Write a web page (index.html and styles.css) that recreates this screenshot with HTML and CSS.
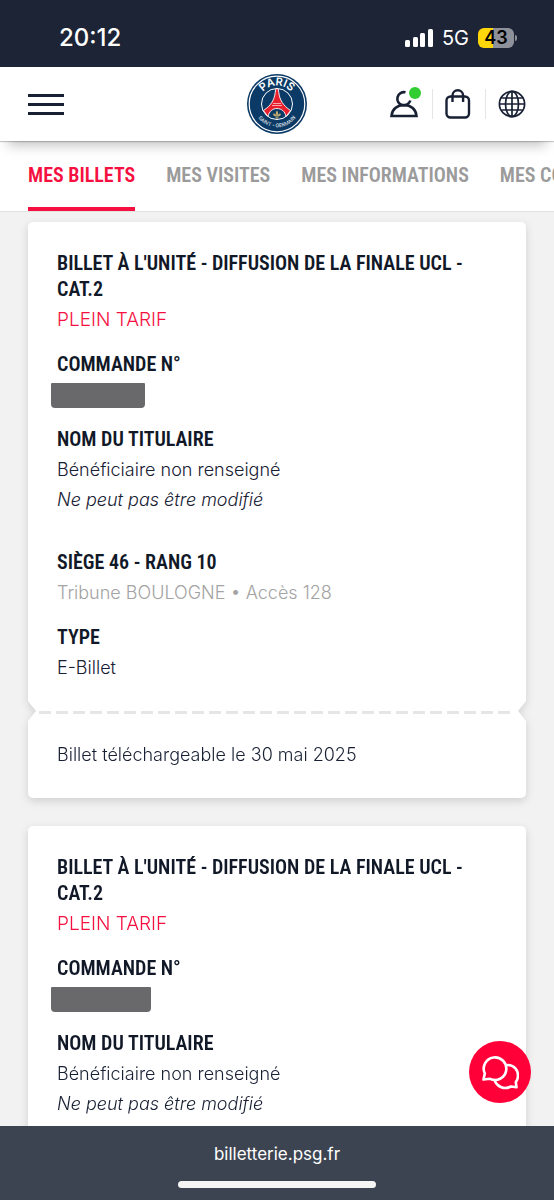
FILE: index.html
```html
<!DOCTYPE html>
<html lang="fr">
<head>
    <meta charset="UTF-8">
    <meta name="viewport" content="width=device-width, initial-scale=1.0">
    <title>Mes billets</title>
    <link rel="stylesheet" href="styles.css">
</head>
<body>
    <div class="status-bar">
        <span class="time">20:12</span>
        <div class="status-right">
            <svg class="signal" viewBox="0 0 28 18" aria-hidden="true">
                <rect x="0" y="11" width="5" height="7" rx="1.5"/>
                <rect x="8" y="8" width="5" height="10" rx="1.5"/>
                <rect x="15" y="4" width="5" height="14" rx="1.5"/>
                <rect x="23" y="0" width="5" height="18" rx="1.5"/>
            </svg>
            <span class="network">5G</span>
            <span class="battery">43</span>
        </div>
    </div>

    <header>
        <button type="button" class="burger" aria-label="Menu"><span></span><span></span><span></span></button>
        <a href="#" class="logo" aria-label="Paris Saint-Germain">
            <svg viewBox="0 0 60 60">
                <circle cx="30" cy="30" r="30" fill="#0b3a66"/>
                <circle cx="30" cy="30" r="27.8" fill="none" stroke="#fff" stroke-width="1.2"/>
                <circle cx="30" cy="30" r="15.5" fill="#0b3a66" stroke="#fff" stroke-width="1"/>
                <path d="M29 14.500h2l.8 4c.8 7 4 13 11.800 18l-4.600 6c-1-5-4.500-8-9-8s-8 3-9 8l-4.600-6c7.800-5 11-11 11.800-18z" fill="#e8202e" stroke="#fff" stroke-width=".9"/>
                <path d="M26 29.500h8M25 31.500h10" stroke="#fff" stroke-width=".6"/>
                <path d="M30 36.500c1.500 2 1.500 3 .5 5 1-.5 1-2.500 3-2 1 1.500-.5 2.500-2 3h-3c-1.500-.5-3-1.500-2-3 2-.5 2 1.500 3 2-1-2-1-3 .5-5zM28 43.300h4l-2 1.700z" fill="#c3ab6c"/>
                <path id="arc-top" d="M11.500 30a18.500 18.500 0 0 1 37 0" fill="none"/>
                <path id="arc-bottom" d="M6.800 30a23.200 23.200 0 0 0 46.400 0" fill="none"/>
                <text class="logo-top" text-anchor="middle"><textPath href="#arc-top" startOffset="50%">PARIS</textPath></text>
                <text class="logo-bottom" text-anchor="middle"><textPath href="#arc-bottom" startOffset="50%">SAINT - GERMAIN</textPath></text>
            </svg>
        </a>
        <div class="tools">
            <button type="button" class="account" aria-label="Mon compte">
                <svg viewBox="0 0 28 28" fill="none" stroke="#182033" stroke-width="2.600">
                    <path d="M15.500 2.300A6.600 6.600 0 1 0 20.300 10.500"/>
                    <path d="M1.500 26c.5-6.500 5.500-11 12.500-11s12 4.500 12.500 11z"/>
                </svg>
                <span class="dot"></span>
            </button>
            <button type="button" class="bag" aria-label="Panier">
                <svg viewBox="0 0 26 30" fill="none" stroke="#182033" stroke-width="2.400">
                    <rect x="1.500" y="7.500" width="22.500" height="21" rx="4"/>
                    <path d="M7.500 13V6.500a5.300 5.300 0 0 1 10.600 0V13"/>
                </svg>
            </button>
            <button type="button" class="language" aria-label="Langue">
                <svg viewBox="0 0 28 28" fill="none" stroke="#182033" stroke-width="1.700">
                    <circle cx="14" cy="14" r="12.600"/>
                    <ellipse cx="14" cy="14" rx="6.500" ry="12.600"/>
                    <path d="M14 1.400v25.200M1.400 14h25.200M3.300 8h21.400M3.300 20h21.400"/>
                </svg>
            </button>
        </div>
    </header>

    <nav>
        <ul>
            <li><a href="#billets" class="active">MES BILLETS</a></li>
            <li><a href="#visites">MES VISITES</a></li>
            <li><a href="#informations">MES INFORMATIONS</a></li>
            <li><a href="#commandes">MES COMMANDES</a></li>
        </ul>
    </nav>

    <main id="billets">
        <article class="ticket">
            <div class="ticket-body">
                <h2>BILLET À L'UNITÉ - DIFFUSION DE LA FINALE UCL - CAT.2</h2>
                <p class="price">PLEIN TARIF</p>
                <h3>COMMANDE N°</h3>
                <p class="order"><span class="masked"></span></p>
                <h3>NOM DU TITULAIRE</h3>
                <p>Bénéficiaire non renseigné</p>
                <p class="note">Ne peut pas être modifié</p>
                <h3>SIÈGE 46 - RANG 10</h3>
                <p class="stand">Tribune BOULOGNE • Accès 128</p>
                <h3>TYPE</h3>
                <p>E-Billet</p>
            </div>
            <div class="ticket-stub">
                <p>Billet téléchargeable le 30 mai 2025</p>
            </div>
        </article>

        <article class="ticket">
            <div class="ticket-body">
                <h2>BILLET À L'UNITÉ - DIFFUSION DE LA FINALE UCL - CAT.2</h2>
                <p class="price">PLEIN TARIF</p>
                <h3>COMMANDE N°</h3>
                <p class="order"><span class="masked masked-long"></span></p>
                <h3>NOM DU TITULAIRE</h3>
                <p>Bénéficiaire non renseigné</p>
                <p class="note">Ne peut pas être modifié</p>
            </div>
        </article>
    </main>

    <footer>
        <button type="button" class="chat" aria-label="Discussion">
            <svg viewBox="0 0 38 36" fill="none" stroke="#fff" stroke-width="2.600" stroke-linejoin="round" stroke-linecap="round">
                <path d="M2.500 25.500 3.800 19.500A11.300 11.300 0 1 1 9 24.800z"/>
                <path d="M26.500 11c6.500 0 10.500 5 10.500 10.500 0 3-1 5-2.200 6.500l.7 5.300-5.500-.8c-6.500 3.500-14 .5-16.500-6.500"/>
            </svg>
        </button>
        <span class="address">billetterie.psg.fr</span>
        <div class="home-bar"></div>
    </footer>
</body>
</html>
```
FILE: styles.css
```css
* {
    box-sizing: border-box;
}

body {
    margin: 0;
    height: 100vh;
    display: flex;
    flex-direction: column;
    background-color: #f2f2f2;
    color: #182033;
    font-family: Inter, "Liberation Sans", sans-serif;
    font-size: 18px;
    font-weight: 300;
    line-height: 30px;
    overflow: hidden;
}

h2, h3, p, ul {
    margin: 0;
    padding: 0;
}

button {
    padding: 0;
    border: none;
    background: none;
    cursor: pointer;
}

svg {
    display: block;
    width: 100%;
}

/* Phone status bar */
.status-bar {
    flex: none;
    height: 67px;
    padding: 8px 40px 0 59px;
    display: flex;
    align-items: center;
    justify-content: space-between;
    background-color: #1c2436;
    color: white;
}

.time {
    font-size: 24px;
    font-weight: 500;
}

.status-right {
    display: flex;
    align-items: center;
    gap: 9px;
}

.signal {
    width: 28px;
    fill: white;
}

.network {
    font-size: 20px;
    font-weight: 400;
}

.battery {
    position: relative;
    width: 36px;
    height: 20px;
    border-radius: 6px;
    background: linear-gradient(to right, #ffd60a 43%, #8e9199 43%);
    color: black;
    font-size: 18px;
    font-weight: 600;
    line-height: 20px;
    text-align: center;
}

.battery::after {
    content: "";
    position: absolute;
    right: -3px;
    top: 7px;
    width: 2px;
    height: 6px;
    border-radius: 0 2px 2px 0;
    background-color: #8e9199;
}

/* Site header */
header {
    flex: none;
    position: relative;
    z-index: 2;
    height: 74px;
    padding: 0 28px;
    display: grid;
    grid-template-columns: 1fr 60px 1fr;
    align-items: center;
    background-color: white;
    box-shadow: 0 1px 1px rgba(0, 0, 0, 0.2), 0 12px 12px -8px rgba(0, 0, 0, 0.25);
}

.burger {
    width: 36px;
    display: flex;
    flex-direction: column;
    gap: 6px;
}

.burger span {
    height: 3px;
    background-color: #182033;
}

.logo-top {
    fill: white;
    font-family: Inter, sans-serif;
    font-size: 11px;
    font-weight: 600;
}

.logo-bottom {
    fill: white;
    font-family: Inter, sans-serif;
    font-size: 5px;
    font-weight: 400;
}

.tools {
    display: flex;
    align-items: center;
    justify-content: flex-end;
}

.tools button {
    height: 30px;
    display: flex;
    align-items: center;
}

.account {
    position: relative;
    width: 28px;
}

.dot {
    position: absolute;
    top: -2px;
    right: -3px;
    width: 12px;
    height: 12px;
    border-radius: 50%;
    background-color: #32cd32;
}

.tools .bag {
    width: 54px;
    margin-left: 14px;
    padding: 0 14px 0 12px;
    border: solid #e5e5e5;
    border-width: 0 1px;
}

.language {
    width: 28px;
    margin-left: 12px;
}

/* Tabs */
nav {
    flex: none;
    height: 71px;
    background-color: white;
    border-bottom: 1px solid #e2e2e2;
    overflow: hidden;
}

nav ul {
    height: 70px;
    padding-left: 28px;
    display: flex;
    gap: 31px;
    list-style: none;
}

nav a {
    display: block;
    height: 70px;
    padding-top: 19px;
    color: #9b9b9b;
    font-family: "Roboto Condensed", "Liberation Sans Narrow", "Liberation Sans", sans-serif;
    font-size: 20px;
    font-weight: 600;
    text-decoration: none;
    white-space: nowrap;
}

nav .active {
    color: #f5103f;
    border-bottom: 4px solid #f5103f;
}

/* Tickets */
main {
    flex: 1;
    min-height: 0;
    padding: 10px 28px 0;
    overflow: hidden;
}

.ticket {
    margin-bottom: 28px;
    filter: drop-shadow(0 3px 4px rgba(0, 0, 0, 0.14));
}

.ticket-body {
    padding: 28px 29px;
    background-color: white;
    border-radius: 5px 5px 0 0;
    clip-path: polygon(0 0, 100% 0, 100% calc(100% - 10px), calc(100% - 8px) 100%, 8px 100%, 0 calc(100% - 10px));
}

.ticket-stub {
    padding: 29px 29px 28px;
    background-color: white;
    background-image: repeating-linear-gradient(to right, #e6e6e6 0, #e6e6e6 12px, white 12px, white 17px);
    background-size: calc(100% - 22px) 3px;
    background-position: 11px 0;
    background-repeat: no-repeat;
    border-radius: 0 0 5px 5px;
    clip-path: polygon(8px 0, calc(100% - 8px) 0, 100% 10px, 100% 100%, 0 100%, 0 10px);
}

.ticket h2,
.ticket h3 {
    margin-bottom: 3px;
    color: #111827;
    font-family: "Roboto Condensed", "Liberation Sans Narrow", "Liberation Sans", sans-serif;
    font-size: 20px;
    font-weight: 600;
    line-height: 26px;
}

.ticket h3 {
    margin-top: 16px;
}

.price {
    color: #f5103f;
    font-size: 19px;
}

.order {
    height: 30px;
    padding-top: 3px;
}

.masked {
    display: block;
    width: 94px;
    height: 25px;
    margin-left: -6px;
    border-radius: 1px 1px 4px 4px;
    background-color: #69696b;
}

.masked-long {
    width: 100px;
}

.note {
    font-style: italic;
}

.ticket .note + h3 {
    margin-top: 34px;
}

.stand {
    color: #a3a3a3;
}

/* Browser bar */
footer {
    flex: none;
    position: relative;
    height: 74px;
    padding-top: 13px;
    display: flex;
    flex-direction: column;
    align-items: center;
    gap: 12px;
    background-color: #3d4451;
    color: white;
}

.address {
    font-size: 17px;
    font-weight: 400;
}

.home-bar {
    width: 198px;
    height: 7px;
    border-radius: 4px;
    background-color: #f5f5f3;
}

.chat {
    position: absolute;
    right: 23px;
    bottom: 97px;
    width: 62px;
    height: 62px;
    padding: 0 12px;
    border-radius: 50%;
    background-color: #ff0038;
}
```
